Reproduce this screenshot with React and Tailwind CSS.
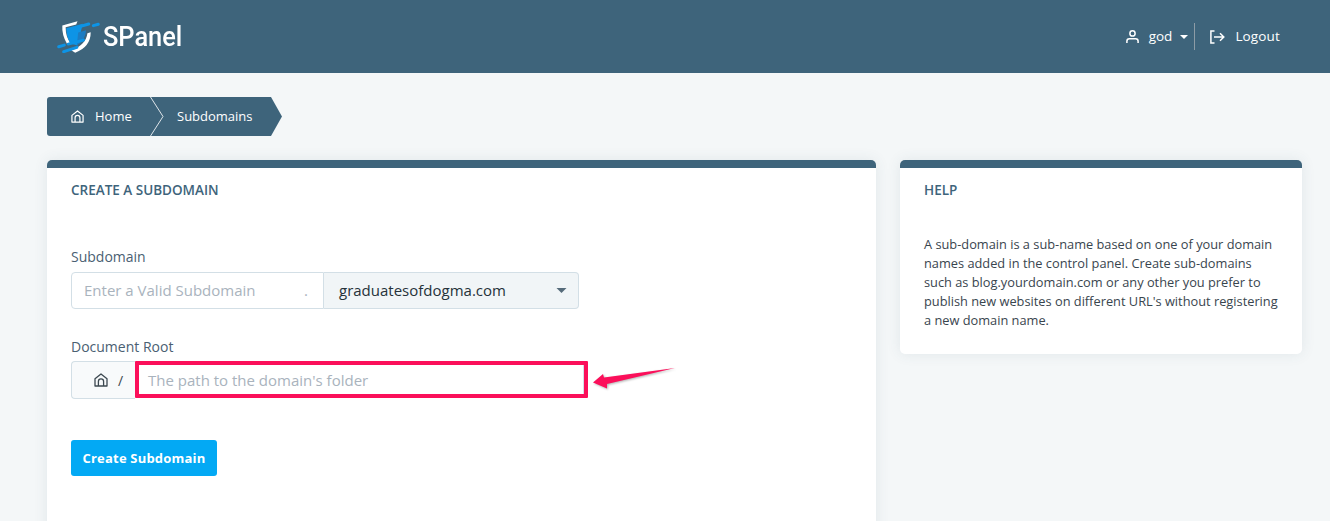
function HomeIcon({ className }) {
    return (
        <svg viewBox="0 0 14 14" fill="none" stroke="currentColor" strokeWidth="1.3" strokeLinejoin="round" className={className}>
            <path d="M1 5.8 7 1l6 4.800V13H1z" />
            <path d="M4.400 13V8.400a2.600 2.600 0 0 1 5.200 0V13" />
        </svg>
    );
}

function UserIcon() {
    return (
        <svg viewBox="0 0 13 13" fill="none" stroke="currentColor" strokeWidth="1.5" className="w-[13px] h-[13px]">
            <circle cx="6.500" cy="3.400" r="2.600" />
            <path d="M.9 13v-1.800c0-1.500 1.100-2.500 2.500-2.500h6.200c1.400 0 2.500 1 2.500 2.500V13" />
        </svg>
    );
}

function LogoutIcon() {
    return (
        <svg viewBox="0 0 15 14" fill="none" stroke="currentColor" strokeWidth="1.5" className="w-[15px] h-[14px]">
            <path d="M4.500 1H.9v12h3.600" />
            <path d="M4 7h10M10 3.300 13.800 7 10 10.700" />
        </svg>
    );
}

function Logo() {
    return (
        <svg viewBox="50 55 130 100" className="w-[43px] h-[33px]">
            <path d="M66 72 112 59 108 69 76 77Q76 105 90 124L80 127Q64 100 66 72z" fill="#fff" />
            <path d="M152 92Q152 136 105 154L93 147Q138 130 142 95z" fill="#fff" />
            <path d="M78 80 128 66 112 132 90 126Q78 105 78 80z" fill="#0d94e6" />
            <path d="M114 93 138 86Q136 116 110 132z" fill="#1c7cc2" />
            <path d="M108 78 146 67M160 72 175 68" stroke="#0d94e6" strokeWidth="9" strokeLinecap="round" />
            <path d="M55 136 72 131M84 128 130 116M70 151 110 138" stroke="#0d94e6" strokeWidth="9" strokeLinecap="round" />
        </svg>
    );
}

function Card({ className, children }) {
    return (
        <div className={`shrink-0 bg-white rounded-[5px] border-t-[8px] border-[#3e647b] shadow-[0_0_14px_rgba(60,90,110,0.1)] pl-[24px] ${className}`}>
            {children}
        </div>
    );
}

export default function App() {
    return (
        <div className="h-[521px] overflow-hidden bg-[#f4f7f8] font-['Open_Sans',sans-serif] relative">
            <header className="h-[73px] bg-[#3e647b] flex items-center justify-between pl-[57px] pr-[50px] text-white">
                <div className="flex items-center gap-[3px]">
                    <Logo />
                    <span className="font-['Roboto',sans-serif] font-medium text-[27px] leading-none mt-[2px] scale-x-[0.94] origin-left">SPanel</span>
                </div>
                <div className="flex items-center text-[13.5px] font-medium">
                    <div className="flex items-center h-[27px] pr-[6px] border-r border-[#8d9ca6]">
                        <UserIcon />
                        <span className="ml-[10px]">god</span>
                        <svg viewBox="0 0 8 4" className="w-[8px] h-[4px] ml-[8px]"><path d="M0 0h8L4 4z" fill="#fff" /></svg>
                    </div>
                    <div className="flex items-center ml-[15px]">
                        <LogoutIcon />
                        <span className="ml-[10px] tracking-[0.15px]">Logout</span>
                    </div>
                </div>
            </header>

            <main className="px-[47px] pt-[24px]">
                <nav className="relative w-[235px] h-[39px] bg-[#3e647b] text-white text-[13px] font-medium rounded-l-[3px] [clip-path:polygon(0_0,224px_0,235px_50%,224px_100%,0_100%)] flex items-center">
                    <HomeIcon className="w-[13px] h-[13px] ml-[24px]" />
                    <span className="ml-[11px]">Home</span>
                    <svg viewBox="0 0 14 39" className="absolute left-[103px] top-0 w-[14px] h-[39px]" fill="none" stroke="#dfe6ea" strokeWidth="1">
                        <path d="M.5 0 13 19.500.5 39" />
                    </svg>
                    <span className="absolute left-[130px]">Subdomains</span>
                </nav>

                <div className="flex gap-[24px] mt-[24px] items-start">
                    <Card className="w-[829px] h-[400px]">
                        <h2 className="text-[#3e647b] text-[13.5px] font-semibold leading-[18px] mt-[13px]">CREATE A SUBDOMAIN</h2>

                        <label className="block text-[#4a6072] text-[14px] leading-[20px] mt-[48px]">Subdomain</label>
                        <div className="flex w-[508px] h-[37px] mt-[5px] text-[15px]">
                            <div className="w-[253px] flex items-center justify-between pl-[12px] pr-[15px] border border-[#d3dfe6] rounded-l-[4px] text-[#a9b3bd]">
                                <span>Enter a Valid Subdomain</span>
                                <span>.</span>
                            </div>
                            <div className="flex-1 flex items-center justify-between pl-[15px] pr-[11px] border border-l-0 border-[#d3dfe6] rounded-r-[4px] bg-[#f1f5f7] text-[#26323a]">
                                <span>graduatesofdogma.com</span>
                                <svg viewBox="0 0 10 5" className="w-[11px] h-[5px]"><path d="M0 0h10L5 5z" fill="#566b7a" /></svg>
                            </div>
                        </div>

                        <label className="block text-[#4a6072] text-[14px] leading-[20px] mt-[28px]">Document Root</label>
                        <div className="flex w-[517px] h-[38px] mt-[4px] text-[15px]">
                            <div className="w-[64px] flex items-center pl-[22px] gap-[10px] border border-r-0 border-[#d3dfe6] rounded-l-[4px] bg-[#f8fafb] text-[#3c4850]">
                                <HomeIcon className="w-[14px] h-[14px] shrink-0" />
                                <span className="text-[14px]">/</span>
                            </div>
                            <div className="flex-1 h-[37px] flex items-center pl-[9px] pt-[1px] border-[4px] border-[#fb0f5a] rounded-[1px] shadow-[inset_-1px_0_0_#d3dfe6] text-[#a9b3bd]">
                                The path to the domain's folder
                            </div>
                        </div>

                        <button className="mt-[41px] block w-[146px] h-[36px] pt-[1px] bg-[#03a9f4] text-white text-[13px] font-bold tracking-[0.2px] rounded-[3px]">
                            Create Subdomain
                        </button>
                    </Card>

                    <Card className="w-[402px] h-[194px] pr-[20px]">
                        <h2 className="text-[#3e647b] text-[13.5px] font-semibold leading-[18px] mt-[13px]">HELP</h2>
                        <p className="text-[#39454e] text-[12.8px] leading-[19px] mt-[36px]">
                            A sub-domain is a sub-name based on one of your domain names added in the control panel. Create sub-domains such as blog.yourdomain.com or any other you prefer to publish new websites on different URL's without registering a new domain name.
                        </p>
                    </Card>
                </div>
            </main>

            <svg viewBox="0 0 84 24" className="absolute left-[592px] top-[366px] w-[84px] h-[24px] drop-shadow-[1px_1px_1px_rgba(0,0,0,0.3)]">
                <path d="M1 16.500 11 8 12 11.500 83 2 15 18 15 22.500z" fill="#fb0f5a" />
            </svg>
        </div>
    );
}
